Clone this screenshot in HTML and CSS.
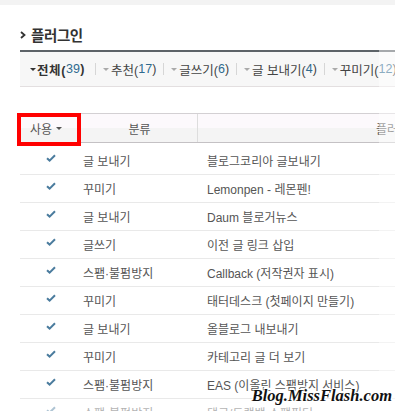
FILE: index.html
```html
<!DOCTYPE html>
<html lang="ko">
<head>
  <meta charset="UTF-8">
  <meta name="viewport" content="width=device-width, initial-scale=1.0">
  <title>플러그인</title>
  <link rel="stylesheet" href="styles.css">
</head>
<body>
  <div class="topStrip"></div>
  <div class="page">
    <h2 class="title">
      <svg class="chev" width="6" height="8" viewBox="0 0 6 8"><path d="M1 1 L4.5 4 L1 7" fill="none" stroke="#333" stroke-width="1.8"/></svg>
      플러그인
    </h2>

    <div class="tabs">
      <span class="tab on"><i class="arr"></i>전체(<em>39</em>)</span>
      <span class="sep"></span>
      <span class="tab"><i class="arr"></i>추천(<em>17</em>)</span>
      <span class="sep"></span>
      <span class="tab"><i class="arr"></i>글쓰기(<em>6</em>)</span>
      <span class="sep"></span>
      <span class="tab"><i class="arr"></i>글 보내기(<em>4</em>)</span>
      <span class="sep"></span>
      <span class="tab"><i class="arr"></i>꾸미기(<em>12</em>)</span>
    </div>

    <div class="list">
      <div class="head">
        <div class="c1">사용 <i class="harr"></i><span class="mark"></span></div>
        <div class="c2">분류</div>
        <div class="c3">플러그인</div>
      </div>
      <div class="rows">
        <div class="row"><div class="c1"><svg class="chk" width="10" height="8" viewBox="0 0 10 8"><path d="M1 4.2 L3.6 6.6 L9 1.2" fill="none" stroke="#4b7c9e" stroke-width="2"/></svg></div><div class="c2">글 보내기</div><div class="c3">블로그코리아 글보내기</div></div>
        <div class="row"><div class="c1"><svg class="chk" width="10" height="8" viewBox="0 0 10 8"><path d="M1 4.2 L3.6 6.6 L9 1.2" fill="none" stroke="#4b7c9e" stroke-width="2"/></svg></div><div class="c2">꾸미기</div><div class="c3">Lemonpen - 레몬펜!</div></div>
        <div class="row"><div class="c1"><svg class="chk" width="10" height="8" viewBox="0 0 10 8"><path d="M1 4.2 L3.6 6.6 L9 1.2" fill="none" stroke="#4b7c9e" stroke-width="2"/></svg></div><div class="c2">글 보내기</div><div class="c3">Daum 블로거뉴스</div></div>
        <div class="row"><div class="c1"><svg class="chk" width="10" height="8" viewBox="0 0 10 8"><path d="M1 4.2 L3.6 6.6 L9 1.2" fill="none" stroke="#4b7c9e" stroke-width="2"/></svg></div><div class="c2">글쓰기</div><div class="c3">이전 글 링크 삽입</div></div>
        <div class="row"><div class="c1"><svg class="chk" width="10" height="8" viewBox="0 0 10 8"><path d="M1 4.2 L3.6 6.6 L9 1.2" fill="none" stroke="#4b7c9e" stroke-width="2"/></svg></div><div class="c2">스팸·불펌방지</div><div class="c3">Callback (저작권자 표시)</div></div>
        <div class="row"><div class="c1"><svg class="chk" width="10" height="8" viewBox="0 0 10 8"><path d="M1 4.2 L3.6 6.6 L9 1.2" fill="none" stroke="#4b7c9e" stroke-width="2"/></svg></div><div class="c2">꾸미기</div><div class="c3">태터데스크 (첫페이지 만들기)</div></div>
        <div class="row"><div class="c1"><svg class="chk" width="10" height="8" viewBox="0 0 10 8"><path d="M1 4.2 L3.6 6.6 L9 1.2" fill="none" stroke="#4b7c9e" stroke-width="2"/></svg></div><div class="c2">글 보내기</div><div class="c3">올블로그 내보내기</div></div>
        <div class="row"><div class="c1"><svg class="chk" width="10" height="8" viewBox="0 0 10 8"><path d="M1 4.2 L3.6 6.6 L9 1.2" fill="none" stroke="#4b7c9e" stroke-width="2"/></svg></div><div class="c2">꾸미기</div><div class="c3">카테고리 글 더 보기</div></div>
        <div class="row"><div class="c1"><svg class="chk" width="10" height="8" viewBox="0 0 10 8"><path d="M1 4.2 L3.6 6.6 L9 1.2" fill="none" stroke="#4b7c9e" stroke-width="2"/></svg></div><div class="c2">스팸·불펌방지</div><div class="c3">EAS (이올린 스팸방지 서비스)</div></div>
        <div class="row"><div class="c1"><svg class="chk" width="10" height="8" viewBox="0 0 10 8"><path d="M1 4.2 L3.6 6.6 L9 1.2" fill="none" stroke="#4b7c9e" stroke-width="2"/></svg></div><div class="c2">스팸·불펌방지</div><div class="c3">댓글/트랙백 스팸필터</div></div>
      </div>
    </div>
  </div>

  <div class="fadeRight"></div>
  <div class="fadeBottom"></div>
  <div class="watermark">Blog.MissFlash.com</div>
</body>
</html>
```

FILE: styles.css
```css
body {
  margin: 0;
  width: 395px;
  height: 411px;
  overflow: hidden;
  position: relative;
  background: #fff;
  font-family: "Liberation Sans", "Noto Sans CJK KR", sans-serif;
  font-size: 12px;
  color: #555;
}

.topStrip {
  height: 5px;
  background-color: #f3f3f3;
}

.page {
  padding-left: 20px;
  width: 600px;
}

.title {
  display: flex;
  align-items: center;
  gap: 5px;
  height: 26px;
  margin: 16px 0 3px;
  font-size: 14.5px;
  font-weight: bold;
  color: #333;
  letter-spacing: -0.4px;
}

.chev {
  margin-top: 1px;
}

.tabs {
  display: flex;
  align-items: center;
  height: 34px;
  border-top: 2px solid #5d6368;
  border-bottom: 1px solid #e3dfe0;
  background-color: #f7f7f7;
  padding-left: 10px;
  font-size: 12.5px;
  color: #444;
}

.tab {
  display: flex;
  align-items: center;
  white-space: nowrap;
}

.tab.on {
  font-weight: bold;
  color: #333;
  letter-spacing: 0.6px;
  padding-right: 3px;
}

.tab em {
  font-style: normal;
  font-weight: normal;
  color: #2f6a8f;
}

.tab.on em {
  letter-spacing: 0.2px;
}

.arr {
  display: inline-block;
  width: 0;
  height: 0;
  border-left: 3px solid transparent;
  border-right: 3px solid transparent;
  border-top: 3px solid #aaa;
  margin-right: 2px;
}

.tab.on .arr {
  border-top-color: #333;
  margin-right: 1px;
}

.sep {
  width: 1px;
  height: 12px;
  background-color: #d6d6d6;
  margin: 0 7px;
}

.list {
  margin-top: 26px;
}

.head {
  display: flex;
  height: 28px;
  border-top: 1px solid #d3d0d3;
  border-bottom: 1px solid #c4c1c4;
  background: linear-gradient(#fcf9fc 50%, #f4f4f4 50%);
  color: #555;
}

.head > div {
  display: flex;
  align-items: center;
}

.c1 {
  width: 62px;
  position: relative;
}

.c2 {
  width: 115px;
}

.c3 {
  width: 400px;
}

.head .c1 {
  padding-left: 10px;
  width: 52px;
}

.head .c2 {
  justify-content: center;
  border-right: 1px solid #ddd;
}

.head .c3 {
  justify-content: center;
}

.harr {
  display: inline-block;
  width: 0;
  height: 0;
  border-left: 3px solid transparent;
  border-right: 3px solid transparent;
  border-top: 3px solid #555;
  margin-left: 4px;
}

.mark {
  position: absolute;
  left: -3px;
  top: -1px;
  width: 56px;
  height: 25px;
  border: 4px solid #f00;
}

.rows {
  padding-top: 4px;
}

.row {
  display: flex;
  height: 27px;
  border-bottom: 1px solid #e9e9e9;
}

.row > div {
  display: flex;
  align-items: center;
  white-space: nowrap;
}

.row .c1 {
  justify-content: center;
}

.row .c2 {
  padding-left: 1px;
  width: 114px;
}

.row .c3 {
  padding-left: 10px;
}

.chk {
  margin-top: -6px;
}

.fadeRight {
  position: absolute;
  left: 379px;
  top: 50px;
  right: 0;
  bottom: 0;
  background-color: rgba(255, 255, 255, 0.45);
}

.fadeBottom {
  position: absolute;
  left: 0;
  right: 0;
  top: 399px;
  bottom: 0;
  background-color: rgba(255, 255, 255, 0.55);
}

.watermark {
  position: absolute;
  right: 3px;
  bottom: 5px;
  font-family: "Liberation Serif", serif;
  font-size: 16.5px;
  font-weight: bold;
  font-style: italic;
  color: #111;
  text-shadow: 1px 1px 0 #fff, -1px -1px 0 #fff, 1px -1px 0 #fff, -1px 1px 0 #fff;
}
```
